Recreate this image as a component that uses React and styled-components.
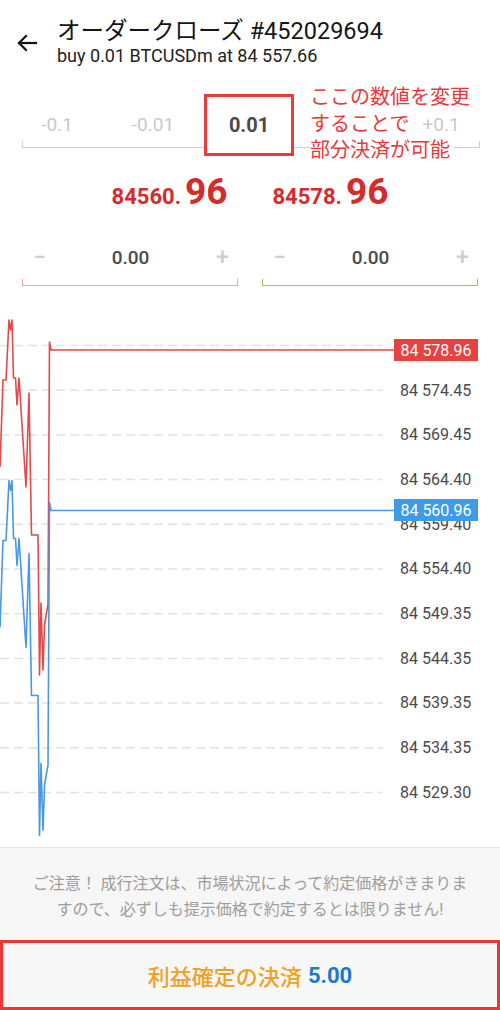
import React from "react";
import styled, { createGlobalStyle } from "styled-components";

const GlobalStyle = createGlobalStyle`
  * { margin: 0; padding: 0; box-sizing: border-box; }
  body {
    font-family: Roboto, "Noto Sans CJK JP", sans-serif;
    background: #ffffff;
    color: #1a1a1a;
    width: 500px;
  }
`;

const Page = styled.div`
  width: 500px;
  height: 1010px;
  overflow: hidden;
  display: flex;
  flex-direction: column;
`;

const Header = styled.header`
  height: 80px;
  display: flex;
  align-items: flex-start;
  padding-top: 17px;
`;

const BackButton = styled.div`
  width: 57px;
  padding: 14px 0 0 15px;
  color: #111;
`;

const TitleBlock = styled.div`
  display: flex;
  flex-direction: column;
`;

const Title = styled.h1`
  font-size: 23.5px;
  font-weight: 400;
  line-height: 28px;
  color: #151515;
`;

const Subtitle = styled.p`
  font-size: 18px;
  line-height: 22px;
  color: #222;
`;

const LotSection = styled.section`
  position: relative;
  padding-top: 20px;
  height: 72px;
`;

const LotRow = styled.div`
  display: grid;
  grid-template-columns: repeat(5, 96px);
  grid-template-rows: 48px;
  margin-left: 9px;
  height: 48px;
  align-items: center;
  justify-items: center;
  position: relative;

  &::after {
    content: "";
    position: absolute;
    left: 13px;
    width: 456px;
    bottom: 0;
    height: 6px;
    border: 1.5px solid #cfcfcf;
    border-top: none;
  }
`;

const LotItem = styled.span`
  font-size: 19px;
  color: #c9c9c9;
`;

const ActiveLot = styled.span`
  width: 90px;
  height: 62px;
  margin-top: 2px;
  border: 3px solid #ea3b3b;
  background: #fff;
  display: flex;
  align-items: center;
  justify-content: center;
  position: relative;
  z-index: 2;
  font-size: 20px;
  font-weight: 700;
  color: #4a4a4a;
`;

const Note = styled.div`
  position: absolute;
  left: 310px;
  top: 4px;
  color: #e83a3a;
  font-size: 20px;
  line-height: 26.5px;
  z-index: 2;

  span {
    display: block;
    width: fit-content;
    background: #fff;
    padding-right: 4px;
  }
`;

const PriceRow = styled.section`
  height: 78px;
  display: flex;
  justify-content: center;
  align-items: flex-start;
  gap: 45px;
  padding-top: 21px;
  color: #d52b2b;
  font-weight: 700;
  line-height: 1;
`;

const Price = styled.div`
  display: flex;
  align-items: baseline;
`;

const PriceHead = styled.span`
  font-size: 22px;
`;

const PriceTail = styled.span`
  font-size: 37px;
  margin-left: 4px;
`;

const StepperRow = styled.section`
  display: grid;
  grid-template-columns: 1fr 1fr;
  gap: 24px;
  padding: 0 22px;
`;

const Stepper = styled.div`
  position: relative;
  height: 56px;
  display: flex;
  align-items: center;
  justify-content: space-between;
  padding: 0 10px 2px 11px;

  &::after {
    content: "";
    position: absolute;
    left: 0;
    right: 0;
    bottom: 0;
    height: 6px;
    border: 1.5px solid ${({ $color }) => $color};
    border-top: none;
  }
`;

const StepSign = styled.span`
  font-size: 23px;
  font-weight: 500;
  color: #cfcfcf;
  width: 12px;
  text-align: center;
`;

const StepValue = styled.span`
  font-size: 19px;
  font-weight: 500;
  color: #4a4a4a;
`;

const Chart = styled.section`
  position: relative;
  margin-top: 14px;
  height: 548px;
  display: grid;
  grid-template-columns: 394px 1fr;
  border-bottom: 1px solid #e3e3e3;
`;

const AxisColumn = styled.div`
  padding-top: 23px;
  padding-left: 6px;
  display: flex;
  flex-direction: column;
`;

const AxisLabel = styled.span`
  height: 44.7px;
  display: flex;
  align-items: center;
  font-size: 16px;
  color: #4a4a4a;
`;

const PriceTag = styled.div`
  position: absolute;
  left: 394px;
  width: 84px;
  top: ${({ $top }) => $top}px;
  height: 22px;
  background: ${({ $bg }) => $bg};
  color: #fff;
  font-size: 16px;
  display: flex;
  align-items: center;
  justify-content: center;
`;

const Notice = styled.section`
  height: 92px;
  background: #f6f6f6;
  padding-top: 23px;
  text-align: center;
  color: #9d9d9d;
  font-size: 16px;
  line-height: 26px;

  span {
    display: block;
    white-space: nowrap;
  }
`;

const CloseButton = styled.button`
  height: 70px;
  width: 500px;
  border: 3px solid #ee3535;
  background: #f7f7f7;
  font-family: Roboto, "Noto Sans CJK JP", sans-serif;
  font-size: 22px;
  font-weight: 500;
  color: #f0a024;
  display: flex;
  align-items: center;
  justify-content: center;
  gap: 6px;
`;

const Amount = styled.span`
  color: #1b78d2;
  font-weight: 700;
`;

const gridYs = Array.from({ length: 11 }, (_, i) => 345.5 + i * 44.7);

const axisLabels = [
  "",
  "84 574.45",
  "84 569.45",
  "84 564.40",
  "84 559.40",
  "84 554.40",
  "84 549.35",
  "84 544.35",
  "84 539.35",
  "84 534.35",
  "84 529.30",
];

const pricePath =
  "M0,467 L3,380 L6,380 L9,320 L10.5,330 L12,320 L13.5,378 L15.5,378 L17,405 L18,392 L19,378 L26,487 L29,393 L31.5,535 L38,535 L39.5,675 L41,603 L43,670 L44.5,625 L47,610 L48,605 L49.5,342 L51,350 L394,350";

function BackArrow() {
  return (
    <svg width="24" height="24" viewBox="0 0 24 24" fill="none" stroke="#111" strokeWidth="2.2" strokeLinecap="square">
      <path d="M21 12H4" />
      <path d="M11 5l-7 7 7 7" />
    </svg>
  );
}

function PriceChart() {
  return (
    <svg width="394" height="548" viewBox="0 300 394 548">
      {gridYs.map((y) => (
        <line key={y} x1="0" x2="383" y1={y} y2={y} stroke="#e2e2e2" strokeWidth="1.5" strokeDasharray="9 5" />
      ))}
      <path d={pricePath} fill="none" stroke="#e24a4a" strokeWidth="1.6" strokeLinejoin="round" />
      <path d={pricePath} transform="translate(0 160.5)" fill="none" stroke="#4a98e2" strokeWidth="1.6" strokeLinejoin="round" />
    </svg>
  );
}

export default function App() {
  return (
    <Page>
      <GlobalStyle />

      <Header>
        <BackButton>
          <BackArrow />
        </BackButton>
        <TitleBlock>
          <Title>オーダークローズ #452029694</Title>
          <Subtitle>buy 0.01 BTCUSDm at 84 557.66</Subtitle>
        </TitleBlock>
      </Header>

      <LotSection>
        <LotRow>
          <LotItem>-0.1</LotItem>
          <LotItem>-0.01</LotItem>
          <ActiveLot>0.01</ActiveLot>
          <span />
          <LotItem>+0.1</LotItem>
        </LotRow>
        <Note>
          <span>ここの数値を変更</span>
          <span>することで</span>
          <span>部分決済が可能</span>
        </Note>
      </LotSection>

      <PriceRow>
        <Price>
          <PriceHead>84560.</PriceHead>
          <PriceTail>96</PriceTail>
        </Price>
        <Price>
          <PriceHead>84578.</PriceHead>
          <PriceTail>96</PriceTail>
        </Price>
      </PriceRow>

      <StepperRow>
        <Stepper $color="#e6a9a9">
          <StepSign>−</StepSign>
          <StepValue>0.00</StepValue>
          <StepSign>+</StepSign>
        </Stepper>
        <Stepper $color="#a9c24a">
          <StepSign>−</StepSign>
          <StepValue>0.00</StepValue>
          <StepSign>+</StepSign>
        </Stepper>
      </StepperRow>

      <Chart>
        <PriceChart />
        <AxisColumn>
          {axisLabels.map((label, i) => (
            <AxisLabel key={i}>{label}</AxisLabel>
          ))}
        </AxisColumn>
        <PriceTag $top={39} $bg="#e84141">84 578.96</PriceTag>
        <PriceTag $top={199} $bg="#3d9be9">84 560.96</PriceTag>
      </Chart>

      <Notice>
        <span>ご注意！ 成行注文は、市場状況によって約定価格がきまりま</span>
        <span>すので、必ずしも提示価格で約定するとは限りません!</span>
      </Notice>

      <CloseButton>
        利益確定の決済 <Amount>5.00</Amount>
      </CloseButton>
    </Page>
  );
}
